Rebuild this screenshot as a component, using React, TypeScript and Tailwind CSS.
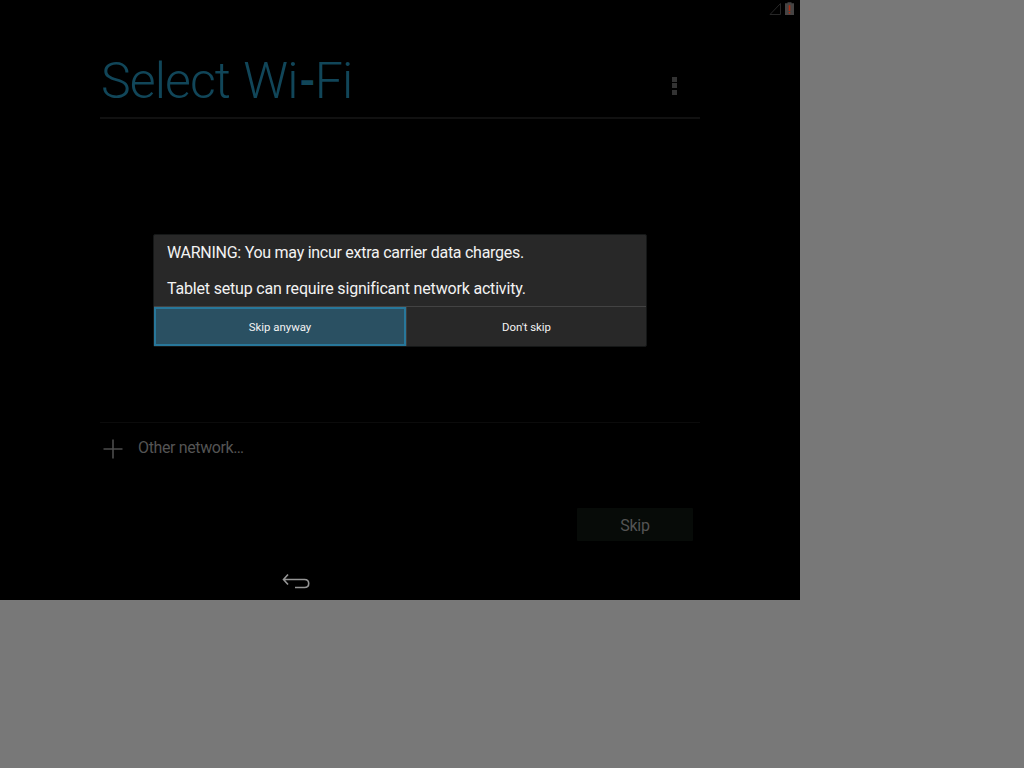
export default function App() {
  return (
    <div className="h-[768px] w-[1024px] overflow-hidden bg-[#787878] font-['Roboto',sans-serif]">
      <div className="relative flex h-[600px] w-[800px] flex-col bg-black">
        <div className="flex h-[18px] justify-end gap-[3px] pt-[2px] pr-[6px]">
          <svg width="13" height="14" viewBox="0 0 13 14" fill="none" className="shrink-0">
            <path d="M1 12.500 L11.500 1.500 V12.500 Z" stroke="#272727" />
          </svg>
          <svg width="9" height="14" viewBox="0 0 9 14" className="shrink-0">
            <path d="M2.500 0.200h4v1H9V13H0V1.200h2.500z" fill="#464444" />
            <path d="M3.700 3.200h1.600v5.800H3.700zM3.700 10h1.600v1.500H3.700z" fill="#b02c10" />
          </svg>
        </div>
        <header className="mx-[100px] flex h-[101px] items-center justify-between border-b-2 border-[#111111] pr-[23.5px] pt-[26px]">
          <h1 className="pl-px text-[50px] leading-[58px] font-light tracking-[-0.9px] whitespace-nowrap text-[#114659] [word-spacing:2px]">
            Select Wi<span className="ml-px inline-block origin-center scale-x-90 font-medium">-</span>Fi
          </h1>
          <div className="mt-[10px] flex flex-col gap-[1.500px]">
            <i className="size-[5px] bg-[#333333]" />
            <i className="size-[5px] bg-[#333333]" />
            <i className="size-[5px] bg-[#333333]" />
          </div>
        </header>
        <main className="mx-[100px] mt-[303px] border-t border-[#0b0b0b]">
          <div className="flex h-[52px] items-center pl-[3px]">
            <svg width="20" height="20" viewBox="0 0 20 20">
              <path d="M10 0.500V19.500M0.500 10H19.500" stroke="#4c4c4c" strokeWidth="1.600" />
            </svg>
            <span className="mb-[2px] ml-[15px] text-[16px] leading-[20px] tracking-[-0.37px] text-[#545454]">Other network…</span>
          </div>
        </main>
        <button className="mt-[33px] mr-[107px] h-[33px] w-[116px] self-end rounded-[1px] bg-[#070b08] pt-[2px] text-[16px] tracking-[-0.2px] text-[#545454]">
          Skip
        </button>
        <nav className="mt-[32px] pl-[282px]">
          <svg width="29" height="17" viewBox="0 0 29 17" fill="none">
            <path d="M6 1.500L1.500 6.500L6 11.500M1.500 6.500H22.500C25.500 6.500 26.700 8 26.700 10.500C26.700 13 25.500 14.500 22.500 14.500H13" stroke="#959595" strokeWidth="1.600" />
          </svg>
        </nav>
        <section role="dialog" className="absolute top-[234px] left-[153px] flex h-[113px] w-[494px] flex-col rounded-[2px] border border-[#151717] bg-[#282828] text-white">
          <p className="h-[71px] pt-[9px] pl-[13px] text-[16px] leading-[18px] tracking-[-0.27px] whitespace-pre text-[#f3f3f3]">{"WARNING: You may incur extra carrier data charges.\n\n"}<span className="tracking-[-0.18px]">Tablet setup can require significant network activity.</span></p>
          <div className="flex h-[40px] border-t border-[#434343] text-[11.4px] text-[#f3f3f3]">
            <button className="w-[252px] border-2 border-[#28779a] bg-[#2a5062] pt-[2px]">Skip anyway</button>
            <button className="flex-1 border-l border-[#3c3c3c] pt-[2px]">Don't skip</button>
          </div>
        </section>
      </div>
    </div>
  );
}
